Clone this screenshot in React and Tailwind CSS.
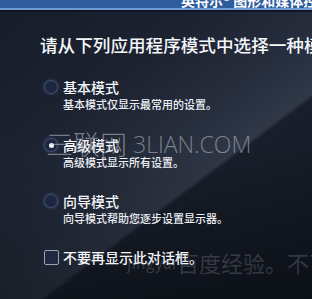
import React from "react";

const cjk = { fontFamily: '"Noto Sans CJK SC", "Noto Sans", sans-serif' };

function Radio({ checked }) {
  return (
    <div className="w-[14px] h-[14px] rounded-full border border-[#3e4e6c] bg-[#1d2740] flex items-center justify-center shadow-[0_0_3px_rgba(90,120,170,0.6)] shrink-0">
      {checked && <div className="w-[5px] h-[5px] rounded-full bg-[#f2f5fb]" />}
    </div>
  );
}

function Option({ checked, label, desc, mt }) {
  return (
    <div className={`flex flex-col ${mt}`}>
      <div className="flex items-center gap-[5px]">
        <Radio checked={checked} />
        <span className="text-[14px] leading-[18px] font-medium text-[#f4f6fa]">{label}</span>
      </div>
      <div className="pl-[19px] text-[11px] leading-[14px] mt-[1px] font-medium text-[#eceff4]">{desc}</div>
    </div>
  );
}

export default function App() {
  return (
    <div
      className="relative w-[312px] h-[299px] overflow-hidden bg-[linear-gradient(143deg,#161c28_0%,#1c2230_30%,#262d3c_50%,#303848_61.5%,#181e2a_62.5%,#121721_100%)]"
      style={cjk}
    >
      <div className="absolute inset-0 bg-[linear-gradient(to_bottom,transparent_50%,rgba(5,8,12,0.45)_100%)] pointer-events-none" />
      <div className="relative flex flex-col h-full">
        <div className="h-[8px] bg-[#2e5c9c] overflow-hidden pl-[181px]">
          <span className="block text-[14px] leading-[14px] font-bold text-white whitespace-nowrap -mt-[7px]">
            英特尔® 图形和媒体控制面板
          </span>
        </div>
        <div className="h-[2px] bg-[#6f9bd6]" />
        <div className="h-[2px] bg-[#0f1420]" />
        <div className="pl-[40px] pt-[21px] text-[17.6px] leading-[24px] font-medium text-[#f4f6fa] whitespace-nowrap">
          请从下列应用程序模式中选择一种模式
        </div>
        <div className="pl-[44px] flex flex-col">
          <Option mt="mt-[21px]" label="基本模式" desc="基本模式仅显示最常用的设置。" />
          <Option mt="mt-[25px]" checked label="高级模式" desc="高级模式显示所有设置。" />
          <Option mt="mt-[23px]" label="向导模式" desc="向导模式帮助您逐步设置显示器。" />
          <div className="flex items-center gap-[4px] mt-[23px]">
            <div className="w-[15px] h-[15px] border border-[#9aa3b3] bg-[#1f2a40] rounded-[2px]" />
            <span className="text-[14px] leading-[18px] font-medium text-[#f4f6fa]">不要再显示此对话框。</span>
          </div>
        </div>
      </div>
      <div className="absolute left-[46px] top-[129px] flex items-center gap-[6px] text-[27px] leading-[30px] text-[rgba(205,210,220,0.5)] whitespace-nowrap pointer-events-none" style={{ fontFamily: '"Noto Sans CJK SC", sans-serif', fontWeight: 300 }}>
        <span>三联网</span>
        <span className="text-[23px]" style={{ fontFamily: '"Open Sans", sans-serif', fontWeight: 300 }}>3LIAN.COM</span>
      </div>
      <div className="absolute left-[127px] top-[250px] flex items-center text-[22px] leading-[24px] text-[rgba(150,155,165,0.28)] whitespace-nowrap pointer-events-none">
        <span className="w-[50px] overflow-hidden text-[16px]">jingyan©</span>
        <span>百度经验。不可</span>
      </div>
    </div>
  );
}
